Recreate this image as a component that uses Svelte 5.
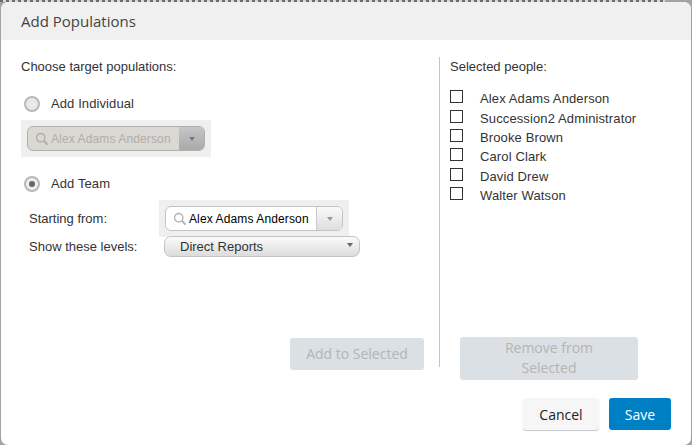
<script lang="ts">
  const people = [
    'Alex Adams Anderson',
    'Succession2 Administrator',
    'Brooke Brown',
    'Carol Clark',
    'David Drew',
    'Walter Watson',
  ];
</script>

{#snippet lens()}
  <svg class="lens" width="14" height="14" viewBox="0 0 14 14" fill="none" stroke="currentColor">
    <circle cx="5.7" cy="5.7" r="4.2" stroke-width="1.3" />
    <path d="M8.8 8.8 L12.6 12.6" stroke-width="2" />
  </svg>
{/snippet}

<div class="page">
  <div class="dialog">
    <header>Add Populations</header>

    <div class="columns">
      <section class="left">
        <p class="heading">Choose target populations:</p>

        <div class="radio-row first">
          <span class="radio"></span>
          <span>Add Individual</span>
        </div>
        <div class="combo-wrap disabled">
          <div class="combo">
            {@render lens()}
            <span class="combo-text">Alex Adams Anderson</span>
            <span class="combo-btn"><i class="caret"></i></span>
          </div>
        </div>

        <div class="radio-row second">
          <span class="radio on"></span>
          <span>Add Team</span>
        </div>
        <div class="field start">
          <span class="field-label">Starting from:</span>
          <div class="combo-wrap">
            <div class="combo">
              {@render lens()}
              <span class="combo-text">Alex Adams Anderson</span>
              <span class="combo-btn"><i class="caret"></i></span>
            </div>
          </div>
        </div>
        <div class="field levels">
          <span class="field-label">Show these levels:</span>
          <div class="select">
            <span>Direct Reports</span>
            <i class="caret dark"></i>
          </div>
        </div>

        <button class="action add" disabled>Add to Selected</button>
      </section>

      <div class="divider"></div>

      <section class="right">
        <p class="heading">Selected people:</p>
        <ul>
          {#each people as name}
            <li><span class="check"></span>{name}</li>
          {/each}
        </ul>
        <button class="action remove" disabled>Remove from Selected</button>
      </section>
    </div>

    <footer>
      <button class="cancel">Cancel</button>
      <button class="save">Save</button>
    </footer>
  </div>
</div>

<style>
  :global(body) {
    margin: 0;
  }

  .page {
    width: 692px;
    height: 445px;
    box-sizing: border-box;
    padding: 2px 1px 0 1px;
    background:
      repeating-linear-gradient(90deg, #6e6e6e 0 3px, #d6d6d6 3px 6px) 0 0 / 665px 2px no-repeat,
      #a3a3a3;
    overflow: hidden;
  }

  .dialog {
    height: 443px;
    display: flex;
    flex-direction: column;
    background: #fff;
    border-radius: 7px;
    overflow: hidden;
    font-family: "Liberation Sans", Arial, sans-serif;
    font-size: 13px;
    color: #333;
  }

  header {
    height: 38px;
    box-sizing: border-box;
    padding: 9px 0 0 20px;
    background: #f0f0f0;
    font-family: "Open Sans", sans-serif;
    font-size: 15px;
    line-height: 20px;
    color: #444;
  }

  .columns {
    display: flex;
    height: 330px;
    padding-top: 17px;
    box-sizing: border-box;
  }

  .heading {
    margin: 2px 0 0;
    line-height: 16px;
  }

  .left {
    width: 418px;
    margin-left: 20px;
    flex-shrink: 0;
    display: flex;
    flex-direction: column;
  }

  .radio-row {
    display: flex;
    align-items: center;
    gap: 11px;
    padding-left: 3px;
    line-height: 16px;
    height: 18px;
    letter-spacing: 0.1px;
  }
  .radio-row.first { margin-top: 20px; }
  .radio-row.second { margin-top: 18px; }

  .radio {
    width: 16px;
    height: 16px;
    box-sizing: border-box;
    border: 2px solid #b8b8b8;
    border-radius: 50%;
    background: #e6e9ed;
    position: relative;
    flex-shrink: 0;
  }
  .radio.on {
    background: #eceef0;
  }
  .radio.on::after {
    content: "";
    position: absolute;
    inset: 3px;
    border-radius: 50%;
    background: #666;
  }

  .combo-wrap {
    width: 190px;
    height: 37px;
    box-sizing: border-box;
    padding: 6px;
    background: #efefef;
  }
  .combo-wrap.disabled {
    margin-top: 7px;
  }

  .combo {
    height: 25px;
    box-sizing: border-box;
    display: flex;
    align-items: center;
    border: 1px solid #c3c3c3;
    border-radius: 6px;
    background: #fff;
    overflow: hidden;
    color: #000;
    font-size: 12px;
    letter-spacing: 0.12px;
  }
  .lens {
    margin-left: 7px;
    flex-shrink: 0;
    color: #b3b3b3;
  }
  .combo-text {
    flex: 1;
    margin-left: 2px;
    white-space: nowrap;
    overflow: hidden;
  }
  .combo-btn {
    width: 25px;
    align-self: stretch;
    display: flex;
    align-items: center;
    justify-content: center;
    flex-shrink: 0;
    border-left: 1px solid #c9c9c9;
    background: linear-gradient(#fafafa, #dedede);
  }
  .caret {
    width: 0;
    height: 0;
    border-left: 3.5px solid transparent;
    border-right: 3.5px solid transparent;
    border-top: 4px solid #999;
  }
  .caret.dark {
    border-top-color: #666;
  }

  .disabled .combo {
    border-color: #b2b0a8;
    background: #dad8d2;
    color: #b0aeaa;
  }
  .disabled .lens { color: #b0aeaa; }
  .disabled .combo-btn {
    border-left: none;
    background: linear-gradient(#c6c6c6, #a9a9a9);
  }
  .disabled .caret { border-top-color: #707a80; }

  .field {
    display: flex;
    align-items: center;
    padding-left: 8px;
  }
  .field-label {
    width: 130px;
    flex-shrink: 0;
  }
  .start {
    margin-top: 7px;
  }
  .levels {
    margin-top: -1px;
  }

  .select {
    width: 196px;
    height: 21px;
    margin-left: 5px;
    box-sizing: border-box;
    display: flex;
    align-items: center;
    justify-content: space-between;
    padding: 0 6px 0 15px;
    border: 1px solid #c4c4c4;
    border-radius: 7px;
    background: linear-gradient(#fbfbfb, #dcdcdc);
  }
  .select .caret {
    margin-bottom: 3px;
  }

  button {
    font-family: "Open Sans", sans-serif;
    font-size: 14px;
    border: none;
    padding: 0;
  }

  .action {
    border-radius: 3px;
    background: #dae0e3;
    color: #b3b5b6;
    line-height: 20px;
  }
  .add {
    width: 134px;
    height: 32px;
    align-self: flex-end;
    margin-top: auto;
    margin-right: 15px;
  }

  .divider {
    width: 1px;
    height: 310px;
    flex-shrink: 0;
    background: #c4c4c4;
  }

  .right {
    width: 250px;
    height: 323px;
    flex-shrink: 0;
    box-sizing: border-box;
    padding-left: 10px;
    display: flex;
    flex-direction: column;
  }

  ul {
    list-style: none;
    margin: 14px 0 0;
    padding: 0;
  }
  li {
    display: flex;
    align-items: center;
    height: 19.4px;
    white-space: nowrap;
    letter-spacing: 0.12px;
  }
  .check {
    width: 13px;
    height: 13px;
    box-sizing: border-box;
    border: 1px solid #333;
    margin-right: 17px;
    position: relative;
    top: -2px;
  }

  .remove {
    width: 178px;
    height: 43px;
    margin-top: auto;
    margin-left: 10px;
    padding: 0 30px 2px;
  }

  footer {
    display: flex;
    justify-content: flex-end;
    gap: 10px;
    padding: 28px 20px 0 0;
  }
  footer button {
    height: 32px;
    border-radius: 3px;
  }
  .cancel {
    width: 76px;
    background: #f6f6f6;
    color: #222;
    box-shadow: 0 1px 1px #c8c8c8;
  }
  .save {
    width: 62px;
    background: #0080c4;
    color: #fff;
  }
</style>
